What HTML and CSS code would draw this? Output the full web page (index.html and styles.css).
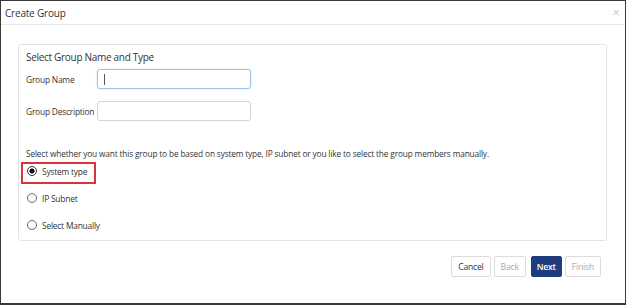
FILE: index.html
```html
<!DOCTYPE html>
<html lang="en">
  <head>
    <meta charset="UTF-8" />
    <meta name="viewport" content="width=device-width, initial-scale=1.0" />
    <title>Create Group</title>
    <link rel="stylesheet" href="styles.css">
  </head>
  <body>
    <div class="modal">
      <div class="modal-header">
        <span class="modal-title">Create Group</span>
        <span class="close">&times;</span>
      </div>

      <div class="modal-body">
        <div class="panel">
          <div class="panel-title">Select Group Name and Type</div>

          <div class="field-row">
            <label class="field-label">Group Name</label>
            <div class="text-input focused"><span class="caret"></span></div>
          </div>
          <div class="field-row second">
            <label class="field-label">Group Description</label>
            <div class="text-input"></div>
          </div>

          <p class="hint">
            Select whether you want this group to be based on system type, IP subnet or you like to select the group members manually.
          </p>

          <div class="options">
            <label class="option selected"><span class="radio checked"></span>System type</label>
            <label class="option"><span class="radio"></span>IP Subnet</label>
            <label class="option"><span class="radio"></span>Select Manually</label>
          </div>
        </div>
      </div>

      <div class="modal-footer">
        <button class="btn">Cancel</button>
        <button class="btn disabled">Back</button>
        <button class="btn primary">Next</button>
        <button class="btn disabled">Finish</button>
      </div>
    </div>
  </body>
</html>
```

FILE: styles.css
```css
body {
  margin: 0;
  font-family: "Open Sans", "Segoe UI", sans-serif;
  color: #333;
  background: #fff;
}

.modal {
  width: 626px;
  height: 305px;
  box-sizing: border-box;
  border: 1px solid #3a3a3a;
  border-bottom-width: 2px;
  background: #fff;
  display: flex;
  flex-direction: column;
}

.modal-header {
  height: 24px;
  box-sizing: border-box;
  border-bottom: 1px solid #e8e8e8;
  display: flex;
  align-items: center;
  justify-content: space-between;
  padding: 0 5px 0 4px;
}

.modal-title {
  font-size: 10px;
  letter-spacing: -0.2px;
}

.close {
  font-size: 13px;
  color: #c8c8c8;
  line-height: 1;
}

.modal-body {
  padding: 19px 18px 0 17px;
}

.panel {
  border: 1px solid #e3e3e3;
  border-radius: 3px;
  padding: 4px 7px 2px 7px;
}

.panel-title {
  font-size: 10px;
  line-height: 16px;
  letter-spacing: -0.3px;
}

.field-row {
  display: flex;
  align-items: center;
  height: 20px;
  margin-top: 4px;
}

.field-row.second {
  margin-top: 12px;
}

.field-label {
  width: 71px;
  font-size: 8.4px;
  letter-spacing: -0.2px;
  white-space: nowrap;
}

.text-input {
  width: 154px;
  height: 20px;
  box-sizing: border-box;
  border: 1px solid #d4d4d4;
  border-radius: 3px;
  display: flex;
  align-items: center;
  padding-left: 6px;
}

.text-input.focused {
  border-color: #9cc4e8;
  box-shadow: 0 0 2px rgba(102, 175, 233, 0.4);
}

.caret {
  width: 1px;
  height: 11px;
  background: #555;
}

.hint {
  margin: 26px 0 0;
  font-size: 8.3px;
  line-height: 14px;
  letter-spacing: -0.15px;
}

.options {
  margin: 1px 0 0 -5px;
  display: flex;
  flex-direction: column;
  align-items: flex-start;
  gap: 5px;
}

.option {
  display: flex;
  align-items: center;
  height: 22px;
  box-sizing: border-box;
  border: 2px solid transparent;
  padding: 0 7px 4px 4px;
  font-size: 8.4px;
  letter-spacing: -0.2px;
}

.option.selected {
  border-color: #d8343c;
}

.radio {
  width: 10px;
  height: 10px;
  box-sizing: border-box;
  border: 1px solid #6a6a6a;
  border-radius: 50%;
  margin-right: 5px;
  background: #fff;
}

.radio.checked {
  border-color: #333;
  background: radial-gradient(circle, #111 0 2.3px, #fff 2.8px);
}

.modal-footer {
  display: flex;
  justify-content: flex-end;
  gap: 3px;
  padding: 15px 24px 0 0;
}

.btn {
  height: 21px;
  padding: 0 6px;
  font-family: inherit;
  font-size: 8.6px;
  letter-spacing: -0.2px;
  color: #333;
  background: #fff;
  border: 1px solid #dcdcdc;
  border-radius: 2px;
}

.btn.disabled {
  color: #aaa;
}

.btn.primary {
  margin-left: 2px;
  padding: 0 5px;
  background: #1f3d7c;
  border-color: #1f3d7c;
  color: #fff;
  font-weight: 600;
}
```
